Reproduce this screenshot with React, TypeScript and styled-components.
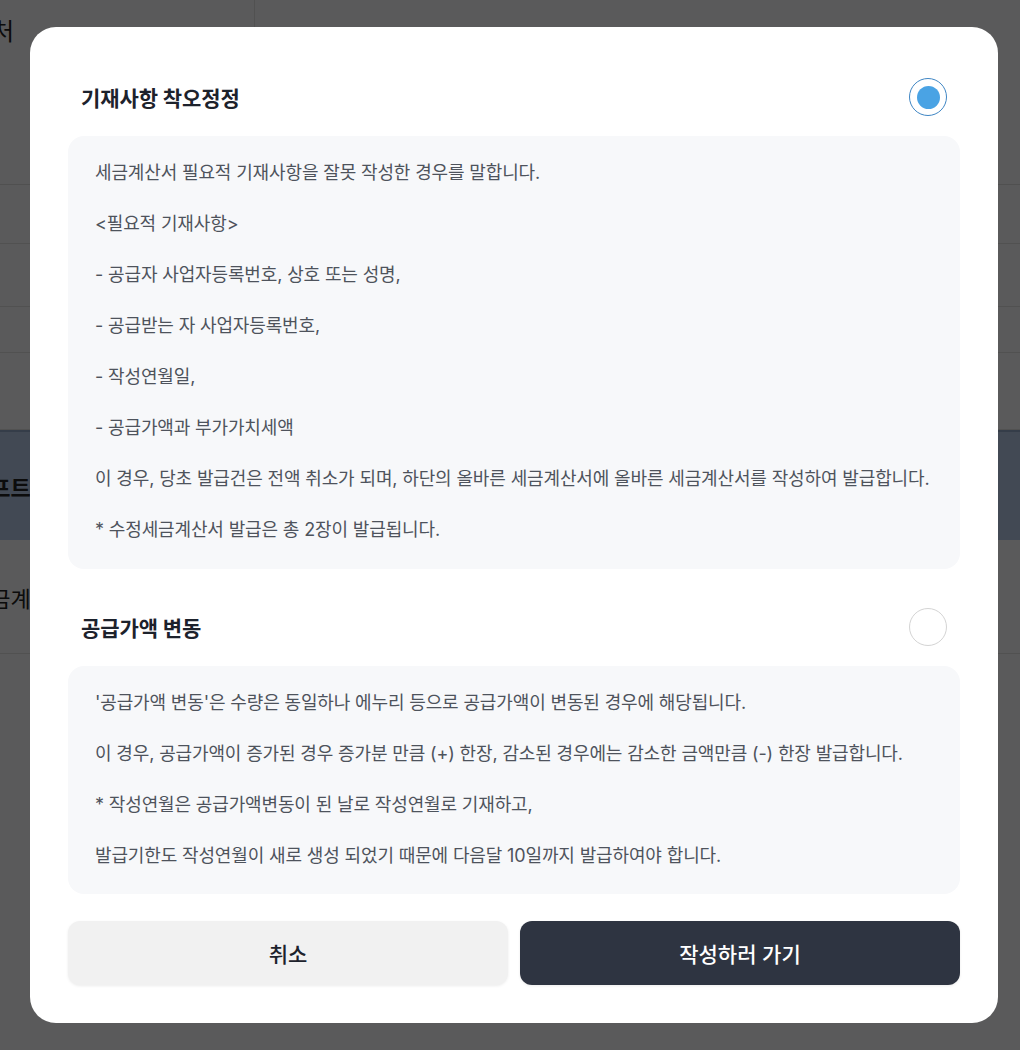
import React from 'react'
import styled, { createGlobalStyle } from 'styled-components'

const GlobalStyle = createGlobalStyle`
  html, body {
    margin: 0;
    padding: 0;
  }
  body {
    font-family: Inter, "Noto Sans CJK KR", sans-serif;
    background: #f4f5f7;
  }
  * {
    box-sizing: border-box;
  }
`

// page behind the dialog
const Page = styled.div`
  width: 1020px;
  height: 1050px;
  overflow: hidden;
  background: #f4f5f7;
  color: #222;
`
const PageInner = styled.div`
  margin-left: -90px;
  width: 1200px;
`
const TopArea = styled.div`
  display: grid;
  grid-template-columns: 345px 1fr;
  height: 185px;
  border-bottom: 1px solid #d8d8d8;
`
const TopCell = styled.div`
  border-right: 1px solid #dcdcdc;
  padding: 12px 240px 0 0;
  font-size: 24px;
  color: #222;
  display: flex;
  justify-content: flex-end;
  align-items: flex-start;
  white-space: nowrap;
  overflow: hidden;
`
const PageRow = styled.div<{ $h: number }>`
  height: ${(p) => p.$h}px;
  border-bottom: 1px solid #dcdcdc;
  display: flex;
  align-items: center;
  justify-content: space-between;
  font-size: 22px;
  padding: 0 0 0 60px;
`
const Band = styled(PageRow)`
  background: #b2c6e3;
  border-top: 2px solid #8fa6c6;
  border-bottom: none;
  font-weight: 600;
`

// dialog
const Overlay = styled.div`
  position: fixed;
  inset: 0;
  background: rgba(0, 0, 0, 0.63);
  display: flex;
  align-items: center;
  justify-content: center;
  padding-left: 8px;
`
const Dialog = styled.div`
  width: 968px;
  background: #fff;
  border-radius: 26px;
  padding: 51px 38px 38px;
  display: flex;
  flex-direction: column;
`
const Section = styled.section`
  display: flex;
  flex-direction: column;
  gap: 20px;
  & + & {
    margin-top: 39px;
  }
`
const SectionHead = styled.label`
  display: flex;
  align-items: center;
  justify-content: space-between;
  height: 38px;
  padding: 0 13px;
  cursor: pointer;
`
const SectionTitle = styled.h2`
  margin: 0;
  font-size: 21px;
  font-weight: 700;
  letter-spacing: -0.1px;
  color: #1d222c;
`
const Radio = styled.span<{ $checked: boolean }>`
  width: 38px;
  height: 38px;
  border-radius: 50%;
  border: 1px solid ${(p) => (p.$checked ? '#3f86c4' : '#d4d4d4')};
  display: flex;
  align-items: center;
  justify-content: center;
  &::after {
    content: '';
    width: 23px;
    height: 23px;
    border-radius: 50%;
    background: ${(p) => (p.$checked ? '#4aa3e4' : 'transparent')};
  }
`
const InfoBox = styled.div`
  background: #f7f8fa;
  border-radius: 16px;
  padding: 24px 27px 26px;
  display: flex;
  flex-direction: column;
  gap: 25.5px;
`
const InfoLine = styled.p`
  margin: 0;
  font-size: 18px;
  line-height: 25.5px;
  letter-spacing: -0.14px;
  color: #4e535c;
  white-space: nowrap;
`
const Actions = styled.div`
  display: grid;
  grid-template-columns: 1fr 1fr;
  gap: 12px;
  margin-top: 27px;
`
const Button = styled.button<{ $primary?: boolean }>`
  height: 64px;
  border: none;
  border-radius: 12px;
  font-family: inherit;
  font-size: 21px;
  font-weight: 500;
  cursor: pointer;
  background: ${(p) => (p.$primary ? '#2e3441' : '#f1f1f1')};
  color: ${(p) => (p.$primary ? '#fff' : '#1d222c')};
  box-shadow: 0 1px 3px rgba(0, 0, 0, 0.08);
`

const options = [
  {
    title: '기재사항 착오정정',
    checked: true,
    lines: [
      '세금계산서 필요적 기재사항을 잘못 작성한 경우를 말합니다.',
      '<필요적 기재사항>',
      '- 공급자 사업자등록번호, 상호 또는 성명,',
      '- 공급받는 자 사업자등록번호,',
      '- 작성연월일,',
      '- 공급가액과 부가가치세액',
      '이 경우, 당초 발급건은 전액 취소가 되며, 하단의 올바른 세금계산서에 올바른 세금계산서를 작성하여 발급합니다.',
      '* 수정세금계산서 발급은 총 2장이 발급됩니다.',
    ],
  },
  {
    title: '공급가액 변동',
    checked: false,
    lines: [
      "'공급가액 변동'은 수량은 동일하나 에누리 등으로 공급가액이 변동된 경우에 해당됩니다.",
      '이 경우, 공급가액이 증가된 경우 증가분 만큼 (+) 한장, 감소된 경우에는 감소한 금액만큼 (-) 한장 발급합니다.',
      '* 작성연월은 공급가액변동이 된 날로 작성연월로 기재하고,',
      '발급기한도 작성연월이 새로 생성 되었기 때문에 다음달 10일까지 발급하여야 합니다.',
    ],
  },
]

export default function App() {
  return (
    <>
      <GlobalStyle />
      <Page>
        <PageInner>
          <TopArea>
            <TopCell>발행처</TopCell>
            <div />
          </TopArea>
          <PageRow $h={59} />
          <PageRow $h={63} />
          <PageRow $h={46} />
          <PageRow $h={77} />
          <Band $h={110}>
            <span>기프트</span>
            <span>사유</span>
          </Band>
          <PageRow $h={114}>
            <span>세금계산서</span>
            <span>사유</span>
          </PageRow>
        </PageInner>
      </Page>

      <Overlay>
        <Dialog>
          {options.map((o) => (
            <Section key={o.title}>
              <SectionHead>
                <SectionTitle>{o.title}</SectionTitle>
                <Radio $checked={o.checked} />
              </SectionHead>
              <InfoBox>
                {o.lines.map((l, i) => (
                  <InfoLine key={i}>{l}</InfoLine>
                ))}
              </InfoBox>
            </Section>
          ))}
          <Actions>
            <Button>취소</Button>
            <Button $primary>작성하러 가기</Button>
          </Actions>
        </Dialog>
      </Overlay>
    </>
  )
}
